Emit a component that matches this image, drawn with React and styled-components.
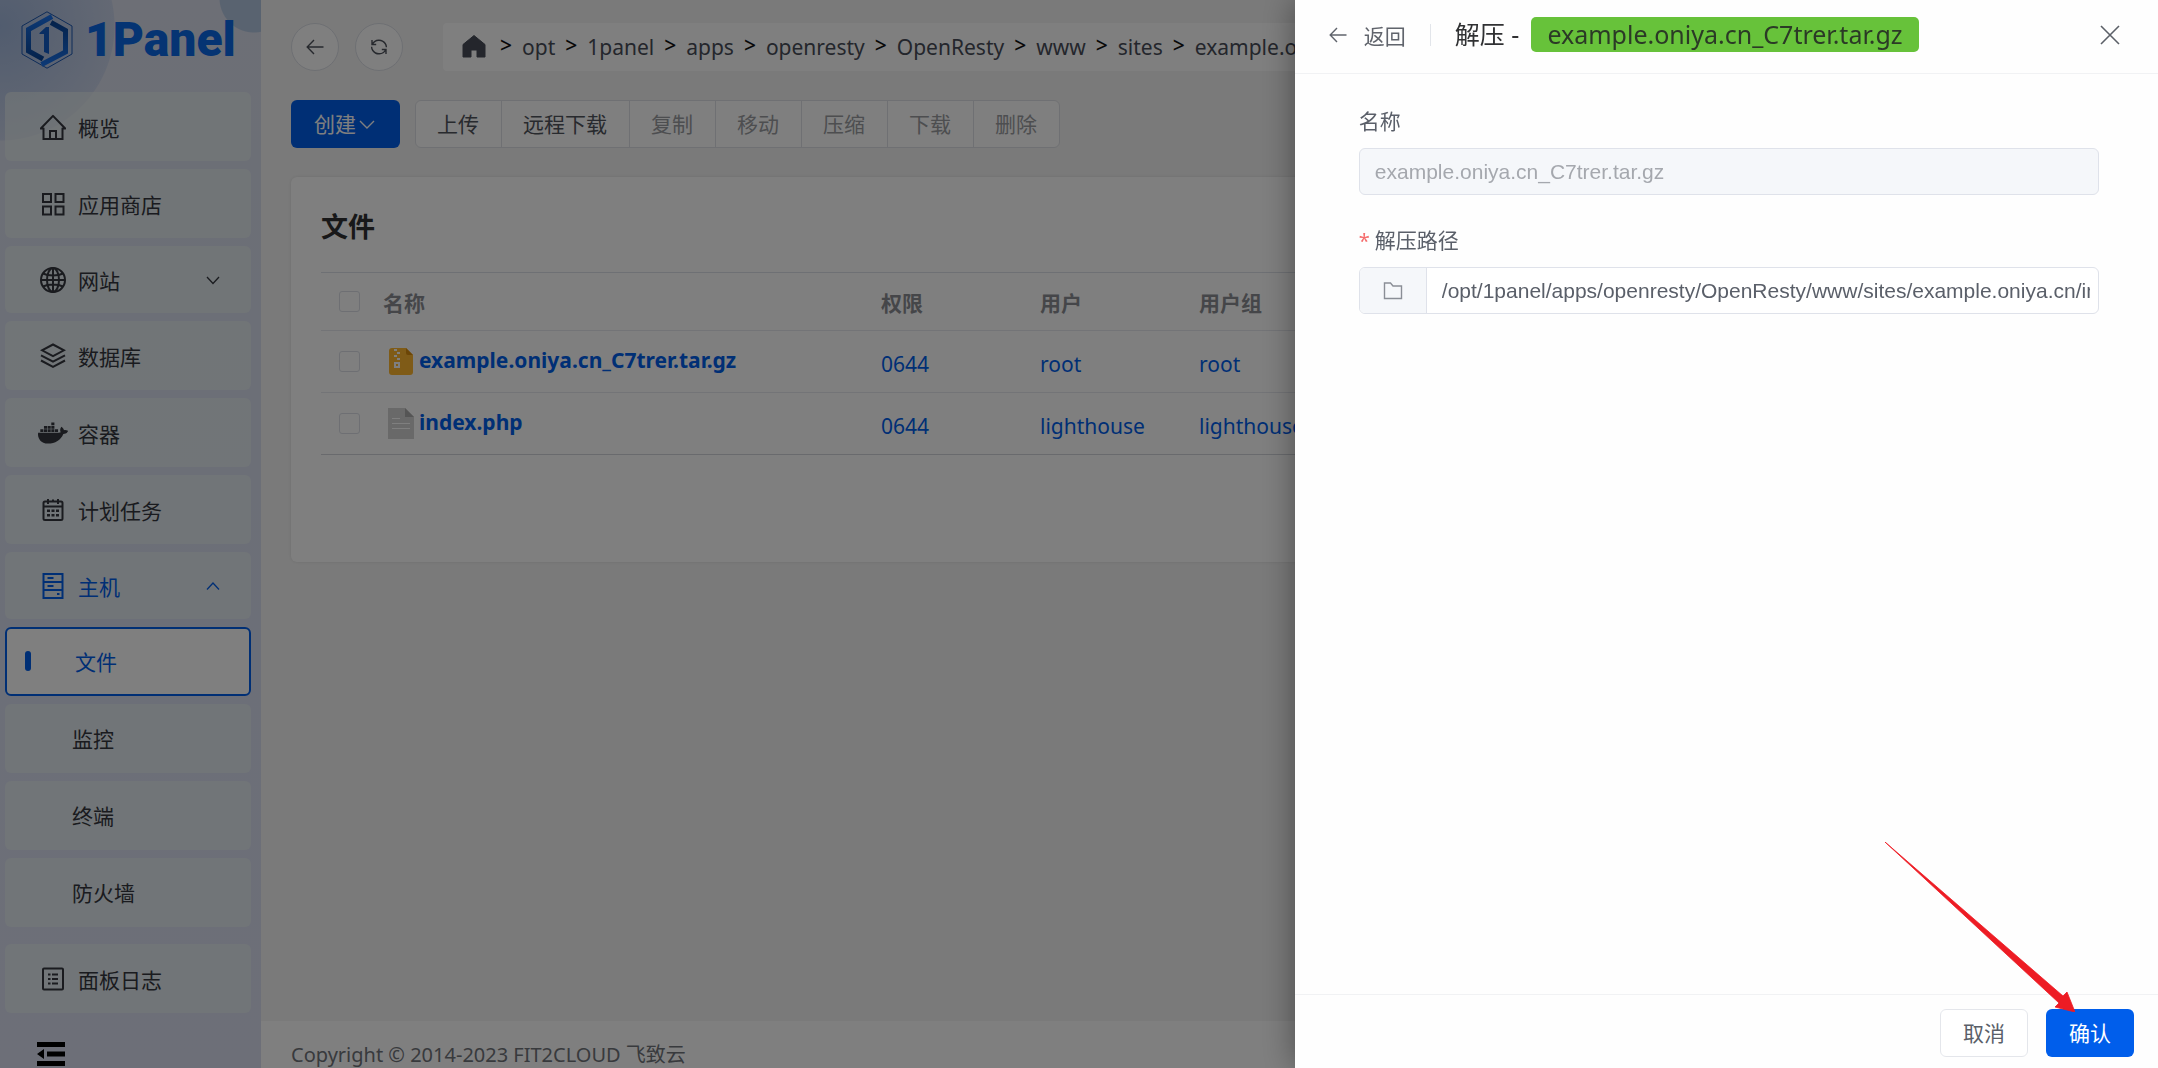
import React from "react";
import styled, { createGlobalStyle, css } from "styled-components";
import { FaDocker } from "react-icons/fa";

const BLUE = "#005eeb";
const UI = '"Noto Sans", "Noto Sans CJK SC", sans-serif';
const CJK = '"Noto Sans CJK SC", sans-serif';

const GlobalStyle = createGlobalStyle`
  * { box-sizing: border-box; }
  html, body { margin: 0; height: 100%; overflow: hidden; }
  body { font-family: ${UI}; font-size: 21px; line-height: 30px; color: #3c4250; background: #f4f4f4; }
  button, input { font: inherit; color: inherit; margin: 0; }
  button { cursor: pointer; padding: 0; }
  a { color: inherit; text-decoration: none; }
  ul, ol { list-style: none; margin: 0; padding: 0; }
  h1, h2, p { margin: 0; font-weight: 400; }
  svg { display: block; flex: none; }
`;

/* ---------- page shell ---------- */

const Shell = styled.div`
  display: flex;
  height: 100vh;
  overflow: hidden;
`;

const Sidebar = styled.aside`
  flex: none;
  width: 261px;
  display: flex;
  flex-direction: column;
  padding: 0 10px 0 5px;
  background:
    radial-gradient(circle at 254px -2px, #b3c6e0 0 34px, transparent 35px),
    radial-gradient(circle at 0 26px, #a3b9de 0, #c8d2e8 114px, transparent 115px),
    linear-gradient(180deg, #dadeec 0, #d8deee 30%, #d9dff0 60%, #dadff0 100%);
`;

const Brand = styled.a`
  display: flex;
  align-items: center;
  gap: 12px;
  height: 92px;
  padding: 0 0 13px 16px;
  color: #0b68e6;
  font-family: Roboto, sans-serif;
  font-size: 48px;
  line-height: 60px;
  font-weight: 900;
`;

const Menu = styled.ul`
  display: flex;
  flex-direction: column;
  gap: 8px;
`;

const itemBox = css`
  width: 100%;
  display: flex;
  align-items: center;
  gap: 12px;
  padding: 0 31px 0 35px;
  border: 0;
  border-radius: 6px;
  background: rgba(234, 242, 240, 0.6);
  color: ${(p) => (p.$on ? BLUE : "#34373e")};
  font-family: ${CJK};
  font-size: 21px;
`;

const MenuLink = styled.a`
  ${itemBox}
  height: 69px;
`;

const MenuToggle = styled.button`
  ${itemBox}
  height: 67px;
  text-align: left;
  & > span { flex: 1; }
`;

const SubMenu = styled(Menu)`
  padding-top: 8px;
`;

const SubLink = styled.a`
  ${itemBox}
  height: 69px;
  gap: 0;
  padding: 0 0 2px 67px;
  ${(p) =>
    p.$on &&
    css`
      padding-left: 18px;
      border: 2px solid ${BLUE};
      background: #fff;
      &::before {
        content: "";
        width: 6px;
        height: 20px;
        margin-right: 44px;
        border-radius: 3px;
        background: ${BLUE};
      }
    `}
`;

const LowerMenu = styled(Menu)`
  margin-top: 17px;
`;

const Collapse = styled.button`
  align-self: flex-start;
  flex: none;
  margin: 29px 0 0 32px;
  border: 0;
  background: none;
  color: #000;
`;

/* ---------- main column ---------- */

const Main = styled.main`
  flex: 1;
  min-width: 0;
  display: flex;
  flex-direction: column;
`;

const Content = styled.div`
  flex: 1;
  padding: 23px 30px 0;
  display: flex;
  flex-direction: column;
  gap: 29px;
`;

const PathBar = styled.div`
  display: flex;
  align-items: center;
  gap: 16px;
`;

const RoundButton = styled.button`
  flex: none;
  width: 48px;
  height: 48px;
  display: grid;
  place-items: center;
  border: 1px solid #dcdfe6;
  border-radius: 50%;
  background: #fff;
  color: #4e535c;
`;

const Crumbs = styled.nav`
  flex: 1;
  min-width: 0;
  height: 48px;
  margin-left: 24px;
  padding: 0 19px;
  background: #fff;
  border-radius: 4px;
  overflow: hidden;
  color: #484d58;
  white-space: nowrap;
  ol { display: flex; height: 100%; align-items: center; }
  li { display: flex; align-items: center; }
  li:first-child { padding-right: 4px; }
  li + li::before {
    content: ">";
    margin: 0 10px;
    padding-bottom: 4px;
    color: #111;
    font-weight: 500;
  }
`;

const Toolbar = styled.div`
  display: flex;
  gap: 15px;
  font-family: ${CJK};
`;

const PrimaryButton = styled.button`
  display: flex;
  align-items: center;
  justify-content: center;
  height: 48px;
  padding: 0 23px 2px;
  border: 0;
  border-radius: 6px;
  background: ${BLUE};
  color: #fff;
  font-family: ${CJK};
  font-size: 21px;
`;

const ButtonGroup = styled.div`
  display: flex;
  border: 1px solid #dfe1e6;
  border-radius: 6px;
  background: #fff;
  overflow: hidden;
`;

const GroupButton = styled.button`
  height: 46px;
  padding: 0 22px 2px 21px;
  border: 0;
  background: none;
  color: #51555d;
  &:disabled { color: #9a9ca1; }
  & + & { border-left: 1px solid #dfe1e6; }
`;

const Card = styled.section`
  min-height: 385px;
  padding: 29px 30px;
  border-radius: 6px;
  background: #fff;
  box-shadow: 0 0 3px rgba(0, 0, 0, 0.1);
`;

const CardTitle = styled.h1`
  margin-bottom: 26px;
  color: #303133;
  font-family: ${CJK};
  font-size: 27px;
  line-height: 40px;
  font-weight: 700;
`;

const FileTable = styled.table`
  width: 100%;
  table-layout: fixed;
  border-collapse: collapse;
  border-top: 1px solid #dde1e8;
  th, td {
    padding: 0;
    border-bottom: 1px solid #e6e8ee;
    text-align: left;
    vertical-align: middle;
    color: ${BLUE};
  }
  th {
    height: 58px;
    color: #8b8d93;
    font-family: ${CJK};
    font-weight: 700;
  }
  td { height: 62px; }
  td:nth-child(n + 3) { padding-top: 4px; }
  tbody tr:last-child td { border-color: #d2d5db; }
`;

const Col = styled.col`
  width: ${(p) => p.$w};
`;

const Check = styled.input`
  appearance: none;
  display: block;
  width: 21px;
  height: 21px;
  margin: 0 0 0 18px;
  border: 1px solid #dcdfe6;
  border-radius: 3px;
  background: #fff;
`;

const FileName = styled.a`
  display: flex;
  align-items: center;
  gap: 5px;
  padding-left: 5px;
  font-weight: 700;
  span { padding-bottom: 3px; }
`;

const Footer = styled.footer`
  height: 47px;
  flex: none;
  padding: 22px 30px 0;
  background: #fff;
  color: #71747a;
  font-size: 20px;
  line-height: 24px;
  white-space: nowrap;
`;

/* ---------- drawer ---------- */

const Mask = styled.div`
  position: fixed;
  inset: 0;
  display: flex;
  justify-content: flex-end;
  background: rgba(0, 0, 0, 0.5);
`;

const Drawer = styled.section`
  position: relative;
  width: 40%;
  height: 100%;
  display: flex;
  flex-direction: column;
  background: #fefefe;
  box-shadow: 0 0 32px rgba(0, 0, 0, 0.4);
`;

const DrawerHeader = styled.header`
  display: flex;
  align-items: center;
  height: 74px;
  padding: 0 36px 4px 34px;
  border-bottom: 1px solid #f1f2f4;
`;

const Back = styled.button`
  display: flex;
  align-items: center;
  gap: 17px;
  margin-right: 24px;
  border: 0;
  background: none;
  color: #60646c;
  font-family: ${CJK};
`;

const Divider = styled.span`
  width: 1px;
  height: 22px;
  margin-right: 24px;
  background: #e2e5ea;
`;

const DrawerTitle = styled.h2`
  display: flex;
  align-items: center;
  gap: 12px;
  flex: 1;
  color: #303133;
  font-size: 25px;
  line-height: 35px;
  white-space: nowrap;
`;

const Tag = styled.span`
  height: 35px;
  padding: 0 16px;
  border-radius: 5px;
  background: #67c23a;
  color: #2b3a26;
`;

const IconButton = styled.button`
  border: 0;
  background: none;
  color: #5c6068;
`;

const Form = styled.form`
  flex: 1;
  display: flex;
  flex-direction: column;
  gap: 26px;
  padding: 28px 59px 0 64px;
`;

const Field = styled.div`
  display: flex;
  flex-direction: column;
  gap: 10px;
  label {
    height: 36px;
    line-height: 36px;
    font-family: ${CJK};
    color: #5a5f69;
  }
`;

const Required = styled.span`
  margin-right: 5px;
  color: #f56c6c;
  font-family: ${UI};
  font-size: 20px;
`;

const InputBox = styled.div`
  display: flex;
  height: 47px;
  border: 1px solid #dfe2ea;
  border-radius: 6px;
  background: #fff;
  overflow: hidden;
`;

const Prepend = styled.button`
  width: 67px;
  flex: none;
  display: grid;
  place-items: center;
  border: 0;
  border-right: 1px solid #dfe2ea;
  background: #f5f7fa;
  color: #8a8e96;
`;

const TextInput = styled.input`
  flex: 1;
  min-width: 0;
  margin: 0 8px 0 15px;
  padding: 0;
  border: 0;
  outline: 0;
  background: none;
  color: #5a5f69;
  font-family: "Liberation Sans", Arial, sans-serif;
  font-size: 21px;
`;

const DisabledBox = styled(InputBox)`
  background: #f5f7fa;
  ${TextInput} { color: #a5a8ae; }
`;

const DrawerFooter = styled.footer`
  display: flex;
  justify-content: flex-end;
  gap: 18px;
  padding: 14px 24px 11px;
  border-top: 1px solid #f1f2f4;
`;

const PlainButton = styled(PrimaryButton)`
  border: 1px solid #e4e6eb;
  padding: 0 22px 2px;
  background: #fff;
  color: #5a5f69;
`;

const Pointer = styled.svg`
  position: absolute;
  right: 83px;
  bottom: 56px;
  pointer-events: none;
`;

/* ---------- icons ---------- */

const Line = ({ size = 26, box = 26, w = 2, children }) => (
  <svg width={size} height={size} viewBox={`0 0 ${box} ${box}`} fill="none" stroke="currentColor" strokeWidth={w} aria-hidden="true">
    {children}
  </svg>
);

const HomeIcon = () => (
  <Line>
    <path d="M3.500 14.500H.8L13 1.900l12.200 12.600h-2.700" strokeLinejoin="round" />
    <path d="M3.500 13.800V25h19V13.800M10 25v-8h6v8" />
  </Line>
);
const GridIcon = () => (
  <Line>
    <path d="M3 3h8v8H3zM15.500 3h8v8h-8zM3 15.500h8v8H3zM15.500 15.500h8v8h-8z" />
  </Line>
);
const GlobeIcon = () => (
  <Line>
    <circle cx="13" cy="13" r="12" />
    <ellipse cx="13" cy="13" rx="6" ry="12" />
    <path d="M13 1v24M1 13h24M3 6.500c5 2.600 15 2.600 20 0M3 19.500c5-2.600 15-2.600 20 0" />
  </Line>
);
const LayersIcon = () => (
  <Line>
    <path d="M13 1.500 24 7.300 13 13.200 2 7.300z" />
    <path d="M1 12.300l12 6.300 12-6.300M1 17.500l12 6.300 12-6.300" />
  </Line>
);
const CalendarIcon = () => (
  <Line>
    <rect x="3.500" y="4.500" width="19" height="18.500" rx="1.500" />
    <path d="M3.500 9.500h19M8 2v5M18 2v5M13 2.500V5" />
    <path d="M7 13.800h12M7 18.300h12" strokeDasharray="3 1.500" strokeWidth="2.400" />
  </Line>
);
const ServerIcon = () => (
  <Line>
    <path d="M3.500 1h19v24h-19zM3.500 9h19M3.500 17h19M7.500 5h6M7.500 13h6M17 21h2.500" />
  </Line>
);
const LogIcon = () => (
  <Line>
    <rect x="3" y="2.500" width="20" height="21" rx="1" />
    <path d="M8 8.500h2.500M12 8.500h6M8 13h2.500M12 13h6M8 17.500h2.500M12 17.500h6" />
  </Line>
);
const Chevron = ({ up }) => (
  <Line size={14} box={14} w={1.300}>
    <path d={up ? "M1 10.500 7 4l6 6.500" : "M1 4l6 6.500L13 4"} />
  </Line>
);
const ArrowLeft = () => (
  <Line size={18} box={18} w={1.400}>
    <path d="M17.500 9H1.500M8 2 1.200 9 8 16" />
  </Line>
);
const Logo = () => (
  <svg width="52" height="58" viewBox="0 0 52 58" aria-hidden="true">
    <defs>
      <linearGradient id="ringA" x1="0" y1="0" x2="0" y2="1">
        <stop offset="0" stopColor="#1a72ea" />
        <stop offset="1" stopColor="#0a4699" />
      </linearGradient>
      <linearGradient id="ringB" x1="0" y1="0" x2="0" y2="1">
        <stop offset="0" stopColor="#0a4699" />
        <stop offset="1" stopColor="#1a72ea" />
      </linearGradient>
    </defs>
    <path d="M26 .8 51 15v28L26 57.200 1 43V15z" fill="none" stroke="#1b57b0" strokeWidth="1" />
    <path d="M31 5.500 7.500 18.500V40L22 48" fill="none" stroke="url(#ringA)" strokeWidth="5" />
    <path d="M30 11.500l14.500 8V41L20.500 53.500" fill="none" stroke="url(#ringB)" strokeWidth="5" />
    <path d="M18.500 22 25 16h3v27l-5-2V23h-4.500z" fill="#125dc6" />
  </svg>
);
const CollapseIcon = () => (
  <svg width="28" height="24" viewBox="0 0 28 24" fill="currentColor" aria-hidden="true">
    <path d="M0 0h28v5H0zM10 9.500h18v5H10zM0 19h28v5H0zM0 12l7-5v10z" />
  </svg>
);
const RefreshIcon = () => (
  <Line size={18} box={18} w={1.400}>
    <path d="M2 2v4.500h4.200M2.500 6C5 1.200 12 .8 15.200 5.500c.8 1.200 1.200 2.400 1.200 3.700" />
    <path d="M16 16v-4.500h-4.200M15.500 12C13 16.800 6 17.200 2.800 12.500 2 11.300 1.600 10.100 1.600 8.800" />
  </Line>
);
const SolidHome = () => (
  <svg width="24" height="24" viewBox="0 0 24 24" aria-hidden="true">
    <path d="M12 .5 23 9.500V22h-8v-7H9v7H1V9.500z" fill="#484d58" stroke="#484d58" strokeLinejoin="round" />
  </svg>
);
const ZipIcon = () => (
  <svg width="26" height="28" viewBox="0 0 26 28" aria-hidden="true">
    <path d="M4 0h14l7 7v17a3 3 0 0 1-3 3H4a3 3 0 0 1-3-3V3a3 3 0 0 1 3-3z" fill="#ffb62e" />
    <path d="M18 0l7 7h-5a2 2 0 0 1-2-2z" fill="#d98c0c" />
    <path d="M6 1h3v2H6zM9 4h3v2H9zM6 7h3v2H6zM9 10h3v2H9zM6 14h6v6H6zM8 16v2h2v-2z" fill="#fff" fillRule="evenodd" />
  </svg>
);
const DocIcon = () => (
  <svg width="26" height="31" viewBox="0 0 26 31" aria-hidden="true">
    <path d="M0 0h17l9 9v22H0z" fill="#d2d2d2" />
    <path d="M17 0l9 9h-9z" fill="#aaa" />
    <path d="M4 10.500h8M4 15.500h18M4 20.500h18" stroke="#fff" strokeWidth="1.200" />
  </svg>
);

/* ---------- data ---------- */

const topItems = [
  { label: "概览", icon: <HomeIcon /> },
  { label: "应用商店", icon: <GridIcon /> },
  { label: "网站", icon: <GlobeIcon />, group: true },
  { label: "数据库", icon: <LayersIcon /> },
  { label: "容器", icon: <FaDocker size={26} viewBox="43 -21 554 554" overflow="visible" /> },
  { label: "计划任务", icon: <CalendarIcon /> },
  { label: "主机", icon: <ServerIcon />, group: true, open: true },
];
const hostItems = ["文件", "监控", "终端", "防火墙"];
const path = ["opt", "1panel", "apps", "openresty", "OpenResty", "www", "sites", "example.oniya.cn"];
const actions = ["上传", "远程下载", "复制", "移动", "压缩", "下载", "删除"];
const ARCHIVE = "example.oniya.cn_C7trer.tar.gz";
const files = [
  { name: ARCHIVE, icon: <ZipIcon />, mode: "0644", owner: "root" },
  { name: "index.php", icon: <DocIcon />, mode: "0644", owner: "lighthouse" },
];

export default function App() {
  return (
    <>
      <GlobalStyle />
      <Shell>
        <Sidebar>
          <Brand href="#">
            <Logo />
            1Panel
          </Brand>
          <Menu>
            {topItems.map((it) => (
              <li key={it.label}>
                {it.group ? (
                  <MenuToggle type="button" $on={it.open} aria-expanded={!!it.open}>
                    {it.icon}
                    <span>{it.label}</span>
                    <Chevron up={it.open} />
                  </MenuToggle>
                ) : (
                  <MenuLink href="#">
                    {it.icon}
                    {it.label}
                  </MenuLink>
                )}
                {it.open && (
                  <SubMenu>
                    {hostItems.map((label, i) => (
                      <li key={label}>
                        <SubLink href="#" $on={i === 0}>{label}</SubLink>
                      </li>
                    ))}
                  </SubMenu>
                )}
              </li>
            ))}
          </Menu>
          <LowerMenu>
            <li>
              <MenuLink href="#">
                <LogIcon />
                面板日志
              </MenuLink>
            </li>
          </LowerMenu>
          <Collapse type="button" aria-label="收起">
            <CollapseIcon />
          </Collapse>
        </Sidebar>

        <Main>
          <Content>
            <PathBar>
              <RoundButton type="button" aria-label="后退"><ArrowLeft /></RoundButton>
              <RoundButton type="button" aria-label="刷新"><RefreshIcon /></RoundButton>
              <Crumbs>
                <ol>
                  <li><a href="#" aria-label="根目录"><SolidHome /></a></li>
                  {path.map((p) => (
                    <li key={p}><a href="#">{p}</a></li>
                  ))}
                </ol>
              </Crumbs>
            </PathBar>
            <Toolbar>
              <PrimaryButton type="button">
                创建
                <Line size={21} box={21} w={1.400}><path d="M4 8l7 7 7-7" /></Line>
              </PrimaryButton>
              <ButtonGroup>
                {actions.map((a, i) => (
                  <GroupButton key={a} type="button" disabled={i > 1}>{a}</GroupButton>
                ))}
              </ButtonGroup>
            </Toolbar>
            <Card>
              <CardTitle>文件</CardTitle>
              <FileTable>
                <colgroup>
                  <Col $w="62px" />
                  <Col $w="498px" />
                  <Col $w="159px" />
                  <Col $w="159px" />
                  <Col $w="auto" />
                </colgroup>
                <thead>
                  <tr>
                    <th><Check type="checkbox" aria-label="全选" /></th>
                    <th>名称</th>
                    <th>权限</th>
                    <th>用户</th>
                    <th>用户组</th>
                  </tr>
                </thead>
                <tbody>
                  {files.map((f) => (
                    <tr key={f.name}>
                      <td><Check type="checkbox" aria-label={f.name} /></td>
                      <td><FileName href="#">{f.icon}<span>{f.name}</span></FileName></td>
                      <td><a href="#">{f.mode}</a></td>
                      <td><a href="#">{f.owner}</a></td>
                      <td><a href="#">{f.owner}</a></td>
                    </tr>
                  ))}
                </tbody>
              </FileTable>
            </Card>
          </Content>
          <Footer>Copyright © 2014-2023 FIT2CLOUD 飞致云</Footer>
        </Main>
      </Shell>

      <Mask>
        <Drawer role="dialog" aria-label="解压">
          <DrawerHeader>
            <Back type="button"><ArrowLeft />返回</Back>
            <Divider />
            <DrawerTitle>
              <span>解压 -</span>
              <Tag>{ARCHIVE}</Tag>
            </DrawerTitle>
            <IconButton type="button" aria-label="关闭">
              <Line size={24} box={24} w={1.600}><path d="M3 3l18 18M21 3 3 21" /></Line>
            </IconButton>
          </DrawerHeader>
          <Form>
            <Field>
              <label htmlFor="name">名称</label>
              <DisabledBox>
                <TextInput id="name" type="text" defaultValue={ARCHIVE} disabled />
              </DisabledBox>
            </Field>
            <Field>
              <label htmlFor="dst"><Required>*</Required>解压路径</label>
              <InputBox>
                <Prepend type="button" aria-label="选择目录">
                  <Line size={20} box={20} w={1.400}><path d="M1.500 2h6l2.500 3h8.500v12.500h-17z" /></Line>
                </Prepend>
                <TextInput id="dst" type="text" defaultValue="/opt/1panel/apps/openresty/OpenResty/www/sites/example.oniya.cn/index" />
              </InputBox>
            </Field>
          </Form>
          <DrawerFooter>
            <PlainButton type="button">取消</PlainButton>
            <PrimaryButton type="button">确认</PrimaryButton>
          </DrawerFooter>
          <Pointer width="190" height="170" viewBox="0 0 190 170" aria-hidden="true">
            <path d="M0 0 178 154 182 150 190 170 170 165 174 161z" fill="#ed1c24" stroke="#ed1c24" strokeWidth=".8" />
          </Pointer>
        </Drawer>
      </Mask>
    </>
  );
}
